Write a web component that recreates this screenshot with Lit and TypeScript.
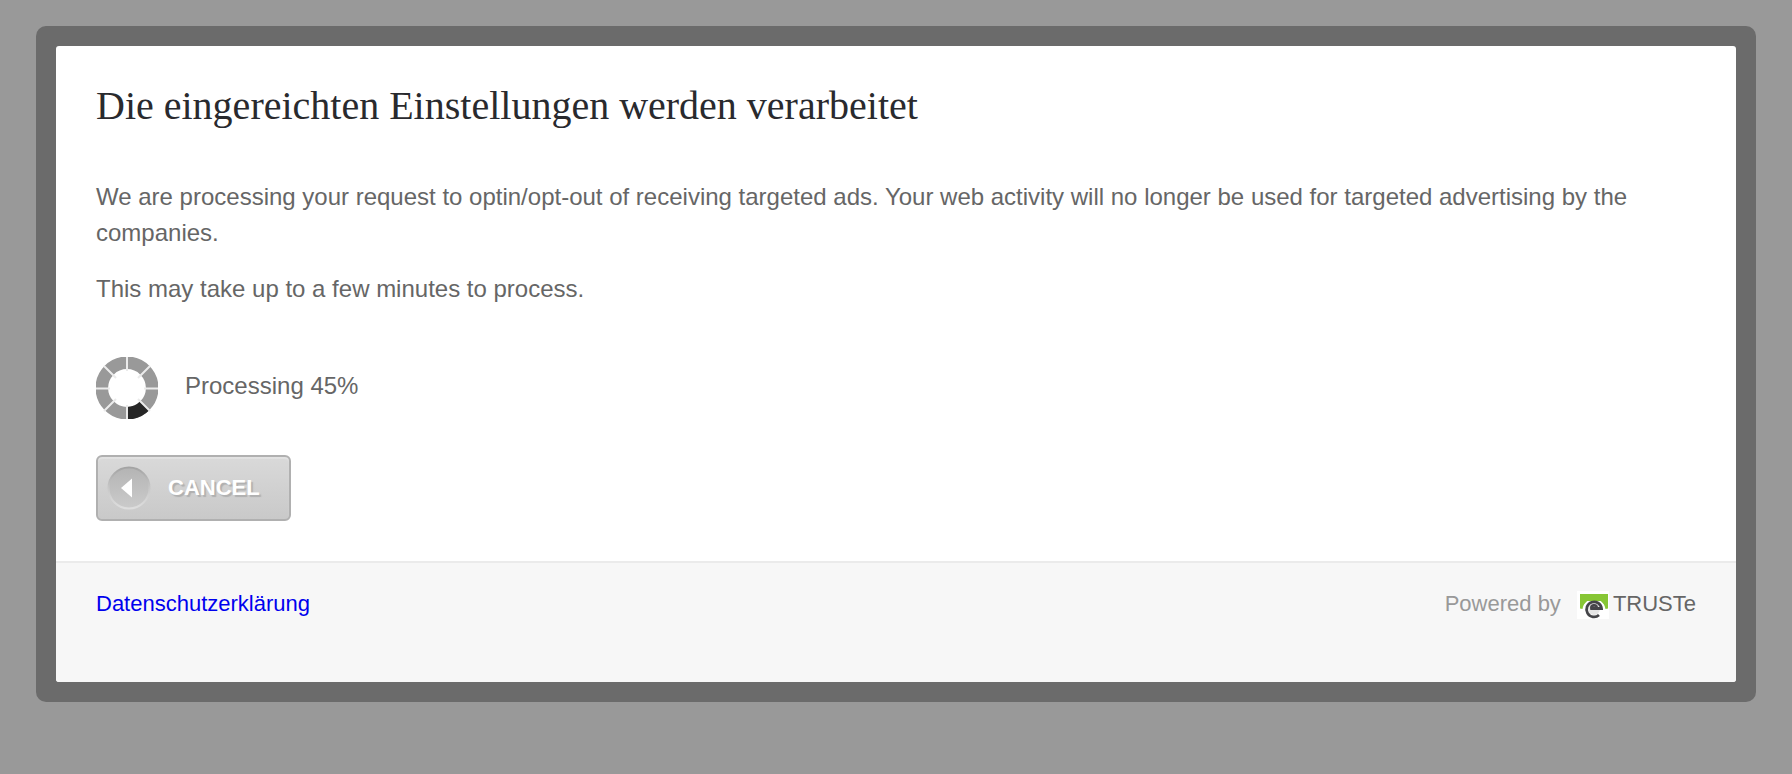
import { LitElement, html, css } from "lit";
import { customElement, property } from "lit/decorators.js";

@customElement("progress-ring")
export class ProgressRing extends LitElement {
  static styles = css`
    :host {
      display: block;
      width: 62px;
      height: 62px;
    }
    .ring {
      display: block;
      width: 100%;
      height: 100%;
    }
  `;

  render() {
    return html`
      <svg class="ring" viewBox="0 0 62 62" aria-hidden="true">
        <circle cx="31" cy="31" r="25.2" fill="none" stroke="#999" stroke-width="12.6" />
        <path d="M31 56.2A25.2 25.2 0 0 0 48.8 48.8" fill="none" stroke="#262626" stroke-width="12.6" />
        <path
          d="M31 0V14M31 48V62M0 31.5H14M48 31.5H62M8 9L20 21M54 9L42 21M8 54L20 42M54 54L42 42"
          stroke="#ebebeb"
          stroke-width="2"
        />
      </svg>
    `;
  }
}

@customElement("app-root")
export class AppRoot extends LitElement {
  @property({ type: Number }) progress = 45;

  static styles = css`
    :host {
      display: block;
      box-sizing: border-box;
      min-height: 100vh;
      padding: 26px 36px;
      background: #999;
      color: #666;
      font: 24px/36px "Liberation Sans", Arial, sans-serif;
    }
    .frame {
      padding: 20px;
      border-radius: 10px;
      background: #6b6b6b;
    }
    .dialog {
      overflow: hidden;
      border-radius: 3px;
      background: #fff;
    }
    .content {
      padding: 40px;
    }
    h1 {
      margin: 0 0 53px;
      color: #292a2e;
      font: 400 40px/40px "Liberation Serif", Georgia, serif;
    }
    p {
      margin: 0 0 20px;
    }
    .status {
      display: flex;
      align-items: center;
      gap: 27px;
      margin: 50px 0 36px;
    }
    .status label {
      padding-bottom: 4px;
    }
    .cancel {
      display: flex;
      align-items: center;
      gap: 17px;
      box-sizing: border-box;
      height: 66px;
      padding: 0 29px 0 9px;
      border: 2px solid #b0b0b0;
      border-radius: 6px;
      background: linear-gradient(#d9d9d9, #c9c9c9);
      box-shadow: inset 0 2px 1px #e2e2e2;
      color: #fff;
      font: 700 22px/32px "Liberation Sans", Arial, sans-serif;
      text-shadow: 2px 2px 1px #b0b0b0;
    }
    .arrow {
      width: 44px;
      height: 46px;
    }
    footer {
      display: flex;
      justify-content: space-between;
      align-items: flex-start;
      box-sizing: border-box;
      min-height: 121px;
      padding: 24px 40px;
      border-top: 2px solid #ebebeb;
      background: #f7f7f7;
      font-size: 22px;
      line-height: 34px;
    }
    .privacy {
      color: #0000ee;
      text-decoration: none;
    }
    .powered {
      display: flex;
      align-items: center;
      color: #999;
    }
    .logo {
      width: 32px;
      height: 28px;
      margin: 2px 4px 0 16px;
    }
    .brand {
      color: #666;
    }
  `;

  render() {
    return html`
      <div class="frame">
        <main class="dialog">
          <section class="content">
            <h1>Die eingereichten Einstellungen werden verarbeitet</h1>
            <p>
              We are processing your request to optin/opt-out of receiving targeted ads. Your web
              activity will no longer be used for targeted advertising by the companies.
            </p>
            <p>This may take up to a few minutes to process.</p>
            <div class="status">
              <progress-ring
                id="ring"
                role="progressbar"
                aria-labelledby="status"
                aria-valuenow=${this.progress}
              ></progress-ring>
              <label id="status">Processing ${this.progress}%</label>
            </div>
            <button class="cancel" type="button">
              <svg class="arrow" viewBox="0 0 44 46" aria-hidden="true">
                <defs>
                  <linearGradient id="well" x1="0" y1="0" x2="0" y2="1">
                    <stop offset="0" stop-color="#b4b4b4" />
                    <stop offset="1" stop-color="#cbcbcb" />
                  </linearGradient>
                  <linearGradient id="rim" x1="0" y1="0" x2="0" y2="1">
                    <stop offset="0" stop-color="#a3a3a3" />
                    <stop offset="0.5" stop-color="#c8c8c8" />
                    <stop offset="1" stop-color="#dedede" />
                  </linearGradient>
                </defs>
                <circle cx="22" cy="23" r="20.5" fill="url(#well)" stroke="url(#rim)" stroke-width="2" />
                <path d="M14 23L25 13.5V32.5Z" fill="#fff" />
              </svg>
              CANCEL
            </button>
          </section>
          <footer>
            <a class="privacy" href="#privacy">Datenschutzerklärung</a>
            <div class="powered">
              Powered by
              <svg class="logo" viewBox="0 0 32 28" aria-hidden="true">
                <defs>
                  <filter id="soft"><feGaussianBlur stdDeviation="0.5" /></filter>
                </defs>
                <path fill="#fff" d="M0 0H32V28H0Z" />
                <g filter="url(#soft)">
                  <path
                    fill="#87c635"
                    d="M3 3H31V17.5L28.5 18C27.5 12 23 7.5 17 7.5S6.5 12 5.5 18L3 17.5Z"
                  />
                  <path fill="#87c635" d="M6 3H28V14L24 10H10L6 14Z" />
                  <circle cx="17" cy="18" r="6" fill="#e6e6e6" />
                  <path
                    d="M22 24A7.5 7.5 0 1 1 24.5 17.5H14.5A2.6 2.6 0 0 1 19.7 16.5"
                    fill="none"
                    stroke="#454549"
                    stroke-width="2.8"
                  />
                </g>
              </svg>
              <span class="brand">TRUSTe</span>
            </div>
          </footer>
        </main>
      </div>
    `;
  }
}
